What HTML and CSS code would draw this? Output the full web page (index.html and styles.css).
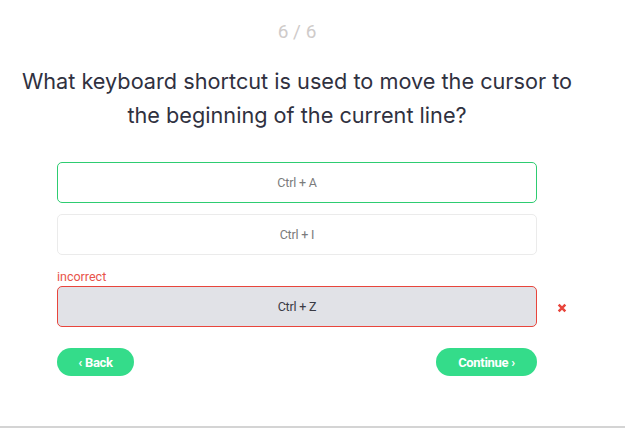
FILE: index.html
```html
<!DOCTYPE html>
<html>
<head>
<meta charset="utf-8">
<link rel="stylesheet" href="styles.css">
</head>
<body>
<div class="page">
  <div class="quiz">
    <div class="counter">6 / 6</div>
    <h1 class="question">What keyboard shortcut is used to move the cursor to the beginning of the current line?</h1>
    <div class="options">
      <div class="option option-correct">Ctrl + A</div>
      <div class="option">Ctrl + I</div>
      <div class="answer">
        <div class="label-incorrect">incorrect</div>
        <div class="answer-row">
          <div class="option option-wrong">Ctrl + Z</div>
          <svg class="x-icon" width="12" height="12" viewBox="0 0 12 12"><path d="M2 2 L10 10 M10 2 L2 10" stroke="#e8453c" stroke-width="3" stroke-linecap="butt"/></svg>
        </div>
      </div>
    </div>
    <div class="nav">
      <button class="btn">‹ Back</button>
      <button class="btn">Continue ›</button>
    </div>
  </div>
</div>
</body>
</html>
```
FILE: styles.css
```css
html, body { margin: 0; padding: 0; background: #fff; }
body { font-family: "Roboto", "Liberation Sans", sans-serif; }
.page {
  height: 428px;
  border-bottom: 2px solid #d4d4d4;
  box-sizing: border-box;
}
.quiz { width: 594px; padding-top: 20px; }
.counter {
  text-align: center;
  color: #cfcbca;
  font-size: 19px;
  line-height: 24px;
}
.question {
  margin: 20px 0 0;
  text-align: center;
  font-family: "Inter", sans-serif;
  font-weight: 400;
  font-size: 21.7px;
  line-height: 34px;
  color: #30313f;
  padding: 0 20px;
}
.options {
  margin: 30px 57px 0;
  display: flex;
  flex-direction: column;
  gap: 11px;
}
.option {
  height: 41px;
  box-sizing: border-box;
  border: 1px solid #ebebeb;
  border-radius: 5px;
  display: flex;
  align-items: center;
  justify-content: center;
  font-size: 12.5px;
  color: #7b7b7b;
  letter-spacing: -0.2px;
  background: #fff;
}
.option-correct { border-color: #2ecc71; }
.option-wrong {
  flex: 1;
  background: #e1e2e7;
  border-color: #e8453c;
  color: #3a3a44;
}
.answer { margin-top: 3px; }
.label-incorrect {
  color: #e8534a;
  font-size: 12.5px;
  line-height: 15px;
  margin-bottom: 2px;
}
.answer-row {
  display: flex;
  align-items: center;
  width: 510px;
  gap: 20px;
}
.x-icon { flex: none; width: 10px; height: 10px; margin-top: 2px; }
.nav {
  margin: 21px 57px 0;
  display: flex;
  justify-content: space-between;
}
.btn {
  border: none;
  background: #34dc8a;
  color: #fff;
  font-family: "Roboto", sans-serif;
  font-weight: 700;
  font-size: 13px;
  height: 28px;
  border-radius: 14px;
  padding: 0 16px;
  letter-spacing: -0.3px;
}
.btn:first-child { width: 77px; }
.btn:last-child { width: 101px; }
```
